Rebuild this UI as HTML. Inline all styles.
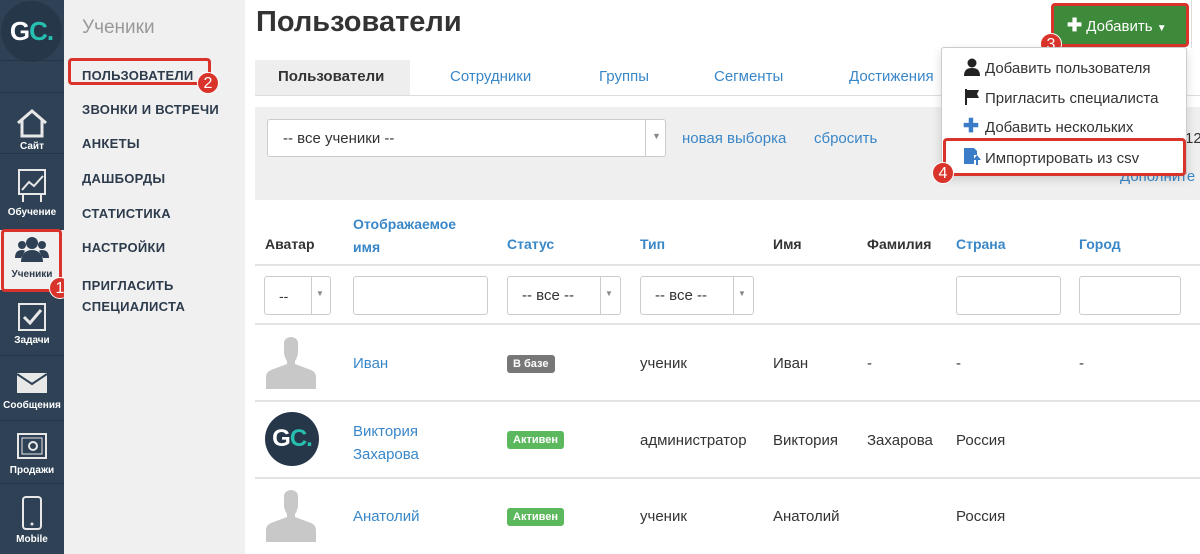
<!DOCTYPE html><html><head><meta charset="utf-8"><style>
*{box-sizing:border-box;margin:0;padding:0}
body{width:1200px;height:554px;overflow:hidden;position:relative;font-family:"Liberation Sans",sans-serif;background:#fff;color:#333}
.a{position:absolute}
#sb{left:0;top:0;width:64px;height:554px;background:#2e4155}
.it{position:absolute;left:0;width:64px;text-align:center;color:#fff;font-size:10px;font-weight:bold}
.sep{position:absolute;left:0;width:64px;height:1px;background:#24344a}
#sub{left:64px;top:0;width:181px;height:554px;background:#f0f0f0}
.sm{position:absolute;left:82px;font-size:13px;font-weight:bold;color:#2d3b4c;letter-spacing:.3px}
.red{position:absolute;border:3px solid #d9342b;border-radius:4px}
.num{position:absolute;width:22px;height:22px;border-radius:50%;background:#d9342b;color:#fff;font-size:16px;text-align:center;line-height:21px;border:1px solid #fff}
.th{position:absolute;font-size:14px;font-weight:bold}
.bl{color:#3a87c8}
.td{position:absolute;font-size:15px}
.hl{position:absolute;left:255px;width:945px;height:2px;background:#e3e3e3}
.inp{position:absolute;border:1px solid #ccc;border-radius:3px;background:#fff;height:39px}
.lab{position:absolute;font-size:11px;font-weight:bold;color:#fff;border-radius:3px;padding:3px 6px}
.tab{position:absolute;top:68px;font-size:15px;color:#3a87c8}
.dd{font-size:15px;color:#333;position:absolute;left:985px}
</style></head><body>
<div id="sb" class="a">
<div class="a" style="left:1px;top:1px;width:61px;height:61px;border-radius:50%;background:#26374a;color:#fff;font-weight:bold;font-size:26px;line-height:61px;text-align:center;letter-spacing:-1px">G<span style="color:#27c0b0">C.</span></div>
<div class="sep" style="top:60px"></div><div class="sep" style="top:92px"></div>
<div class="it" style="top:108px"><svg width="34" height="30" viewBox="0 0 34 30"><path d="M3 15L17 3 31 15M7 12v16h20V12" fill="none" stroke="#e8e8e8" stroke-width="3"/></svg><div>Сайт</div></div>
<div class="sep" style="top:153px"></div>
<div class="it" style="top:168px"><svg width="30" height="36" viewBox="0 0 30 36"><rect x="2" y="2" width="26" height="24" fill="none" stroke="#e8e8e8" stroke-width="2"/><path d="M5 22l7-8 5 4 9-10M6 26v8M24 26v8" fill="none" stroke="#e8e8e8" stroke-width="2"/></svg><div>Обучение</div></div>
<div class="a" style="left:0;top:230px;width:64px;height:60px;background:#f0f0f0"></div>
<div class="it" style="top:236px;color:#2d3b4c"><svg width="34" height="26" viewBox="0 0 34 26"><circle cx="17" cy="7" r="6" fill="#2e4155"/><circle cx="7" cy="9" r="4" fill="#2e4155"/><circle cx="27" cy="9" r="4" fill="#2e4155"/><path d="M6 26c0-8 5-12 11-12s11 4 11 12z M0 22c0-6 3-8 7-8 2 0 3 1 3 1L6 22z M34 22c0-6-3-8-7-8-2 0-3 1-3 1l4 7z" fill="#2e4155"/></svg><div style="margin-top:4px">Ученики</div></div>
<div class="it" style="top:302px"><svg width="30" height="30" viewBox="0 0 30 30"><rect x="2" y="2" width="26" height="26" fill="none" stroke="#e8e8e8" stroke-width="2"/><path d="M7 15l6 6 11-13" fill="none" stroke="#e8e8e8" stroke-width="3"/></svg><div>Задачи</div></div>
<div class="sep" style="top:355px"></div>
<div class="it" style="top:372px"><svg width="32" height="22" viewBox="0 0 32 22"><rect x="1" y="1" width="30" height="20" fill="#e8e8e8"/><path d="M1 2l15 10 15-10" fill="none" stroke="#2e4155" stroke-width="2"/></svg><div style="margin-top:3px">Сообщения</div></div>
<div class="sep" style="top:420px"></div>
<div class="it" style="top:432px"><svg width="32" height="30" viewBox="0 0 32 30"><rect x="2" y="2" width="28" height="24" fill="none" stroke="#e8e8e8" stroke-width="2"/><rect x="6" y="6" width="20" height="16" fill="none" stroke="#e8e8e8" stroke-width="1"/><circle cx="17" cy="14" r="4" fill="none" stroke="#e8e8e8" stroke-width="2"/></svg><div>Продажи</div></div>
<div class="sep" style="top:483px"></div>
<div class="it" style="top:495px"><svg width="22" height="36" viewBox="0 0 22 36"><rect x="2" y="2" width="18" height="32" rx="3" fill="none" stroke="#e8e8e8" stroke-width="2"/><circle cx="11" cy="29" r="1.5" fill="#e8e8e8"/></svg><div>Mobile</div></div>
</div>
<div class="red" style="left:1px;top:229px;width:61px;height:63px"></div><div class="num" style="left:49px;top:277px">1</div>
<div id="sub" class="a"></div>
<div class="a" style="left:82px;top:17px;font-size:19px;color:#999">Ученики</div>
<div class="sm" style="top:68px">ПОЛЬЗОВАТЕЛИ</div>
<div class="red" style="left:68px;top:58px;width:143px;height:27px"></div><div class="num" style="left:197px;top:72px">2</div>
<div class="sm" style="top:102px">ЗВОНКИ И ВСТРЕЧИ</div>
<div class="sm" style="top:136px">АНКЕТЫ</div>
<div class="sm" style="top:171px">ДАШБОРДЫ</div>
<div class="sm" style="top:206px">СТАТИСТИКА</div>
<div class="sm" style="top:240px">НАСТРОЙКИ</div>
<div class="sm" style="top:275px;line-height:21px">ПРИГЛАСИТЬ<br>СПЕЦИАЛИСТА</div>

<div class="a" style="left:256px;top:6px;font-size:29px;font-weight:bold;color:#333">Пользователи</div>
<div class="a" style="left:255px;top:60px;width:155px;height:36px;background:#eee"></div>
<div class="tab" style="left:278px;color:#333;font-weight:bold">Пользователи</div>
<div class="tab" style="left:450px">Сотрудники</div>
<div class="tab" style="left:599px">Группы</div>
<div class="tab" style="left:714px">Сегменты</div>
<div class="tab" style="left:849px">Достижения</div>
<div class="a" style="left:255px;top:95px;width:945px;height:1px;background:#ddd"></div>
<div class="a" style="left:255px;top:107px;width:945px;height:93px;background:#efefef"></div>
<div class="inp" style="left:267px;top:119px;width:399px;height:38px"><span class="a" style="left:15px;top:10px;font-size:15px">-- все ученики --</span><span class="a" style="left:377px;top:0;width:1px;height:37px;background:#ccc"></span><span class="a" style="left:384px;top:11px;font-size:9px;color:#888">▼</span></div>
<div class="a bl" style="left:682px;top:130px;font-size:15px">новая выборка</div>
<div class="a bl" style="left:814px;top:130px;font-size:15px">сбросить</div>
<div class="a" style="left:1185px;top:130px;font-size:15px">12</div>
<div class="a bl" style="left:1120px;top:168px;font-size:15px">Дополните</div>

<div class="th" style="left:265px;top:236px">Аватар</div>
<div class="th bl" style="left:353px;top:213px;line-height:23px">Отображаемое<br>имя</div>
<div class="th bl" style="left:507px;top:236px">Статус</div>
<div class="th bl" style="left:640px;top:236px">Тип</div>
<div class="th" style="left:773px;top:236px">Имя</div>
<div class="th" style="left:867px;top:236px">Фамилия</div>
<div class="th bl" style="left:956px;top:236px">Страна</div>
<div class="th bl" style="left:1079px;top:236px">Город</div>
<div class="hl" style="top:264px"></div>
<div class="inp" style="left:264px;top:276px;width:67px"><span class="a" style="left:14px;top:11px;font-size:14px">--</span><span class="a" style="left:46px;top:0;width:1px;height:37px;background:#ccc"></span><span class="a" style="left:51px;top:12px;font-size:8px;color:#888">▼</span></div>
<div class="inp" style="left:353px;top:276px;width:135px"></div>
<div class="inp" style="left:507px;top:276px;width:114px"><span class="a" style="left:14px;top:10px;font-size:15px">-- все --</span><span class="a" style="left:92px;top:0;width:1px;height:37px;background:#ccc"></span><span class="a" style="left:97px;top:12px;font-size:8px;color:#888">▼</span></div>
<div class="inp" style="left:640px;top:276px;width:114px"><span class="a" style="left:14px;top:10px;font-size:15px">-- все --</span><span class="a" style="left:92px;top:0;width:1px;height:37px;background:#ccc"></span><span class="a" style="left:97px;top:12px;font-size:8px;color:#888">▼</span></div>
<div class="inp" style="left:956px;top:276px;width:105px"></div>
<div class="inp" style="left:1079px;top:276px;width:102px"></div>
<div class="hl" style="top:323px"></div>

<svg class="a" style="left:265px;top:337px" width="52" height="52" viewBox="0 0 52 52"><path d="M19 6c0-4 4-6 7-6s7 2 7 6v9c0 5-3 9-3 9v3l16 6c4 2 5 4 5 8v11H1V41c0-4 1-6 5-8l16-6v-3s-3-4-3-9z" fill="#c8c8c8"/></svg>
<div class="td bl" style="left:353px;top:355px">Иван</div>
<div class="lab" style="left:507px;top:355px;background:#777">В базе</div>
<div class="td" style="left:640px;top:355px">ученик</div>
<div class="td" style="left:773px;top:355px">Иван</div>
<div class="td" style="left:867px;top:355px">-</div>
<div class="td" style="left:956px;top:355px">-</div>
<div class="td" style="left:1079px;top:355px">-</div>
<div class="hl" style="top:400px"></div>
<div class="a" style="left:265px;top:412px;width:54px;height:54px;border-radius:50%;background:#26374a;color:#fff;font-weight:bold;font-size:24px;line-height:54px;text-align:center;letter-spacing:-1px">G<span style="color:#27c0b0">C.</span></div>
<div class="td bl" style="left:353px;top:420px;line-height:23px">Виктория<br>Захарова</div>
<div class="lab" style="left:507px;top:431px;background:#5cb85c">Активен</div>
<div class="td" style="left:640px;top:432px">администратор</div>
<div class="td" style="left:773px;top:432px">Виктория</div>
<div class="td" style="left:867px;top:432px">Захарова</div>
<div class="td" style="left:956px;top:432px">Россия</div>
<div class="hl" style="top:477px"></div>
<svg class="a" style="left:265px;top:490px" width="52" height="52" viewBox="0 0 52 52"><path d="M19 6c0-4 4-6 7-6s7 2 7 6v9c0 5-3 9-3 9v3l16 6c4 2 5 4 5 8v11H1V41c0-4 1-6 5-8l16-6v-3s-3-4-3-9z" fill="#c8c8c8"/></svg>
<div class="td bl" style="left:353px;top:508px">Анатолий</div>
<div class="lab" style="left:507px;top:508px;background:#5cb85c">Активен</div>
<div class="td" style="left:640px;top:508px">ученик</div>
<div class="td" style="left:773px;top:508px">Анатолий</div>
<div class="td" style="left:956px;top:508px">Россия</div>

<div class="a" style="left:1191px;top:0;width:1px;height:48px;background:#ddd"></div>
<div class="a" style="left:1053px;top:5px;width:133px;height:40px;background:#3d8a3a;color:#fff;font-size:15px;line-height:40px;padding-left:14px"><b style="font-size:18px">✚</b> Добавить <span style="font-size:10px">▼</span></div>
<div class="red" style="left:1051px;top:3px;width:138px;height:44px"></div><div class="num" style="left:1040px;top:33px">3</div>
<div class="a" style="left:941px;top:47px;width:246px;height:128px;background:#fff;border:1px solid #ccc;border-radius:3px;box-shadow:0 4px 10px rgba(0,0,0,.15)"></div>
<svg class="a" style="left:963px;top:58px" width="18" height="18" viewBox="0 0 18 18"><circle cx="9" cy="5" r="4.5" fill="#222"/><path d="M1 18c0-6 3-8 8-8s8 2 8 8z" fill="#222"/></svg>
<div class="dd" style="top:60px">Добавить пользователя</div>
<svg class="a" style="left:964px;top:89px" width="18" height="16" viewBox="0 0 18 16"><path d="M2 0v16" stroke="#222" stroke-width="2"/><path d="M3 1h12l-2 4 2 4H3z" fill="#222"/></svg>
<div class="dd" style="top:90px">Пригласить специалиста</div>
<div class="a" style="left:963px;top:115px;font-size:19px;font-weight:bold;color:#3a7cc8">✚</div>
<div class="dd" style="top:119px">Добавить нескольких</div>
<svg class="a" style="left:963px;top:147px" width="18" height="18" viewBox="0 0 18 18"><path d="M1 1h10l3 3v4h-3v9H1z" fill="#3a7cc8"/><path d="M14 8l4 5h-3v5h-2v-5h-3z" fill="#3a7cc8"/></svg>
<div class="dd" style="top:150px">Импортировать из csv</div>
<div class="red" style="left:943px;top:138px;width:243px;height:38px"></div><div class="num" style="left:932px;top:162px">4</div>
</body></html>
